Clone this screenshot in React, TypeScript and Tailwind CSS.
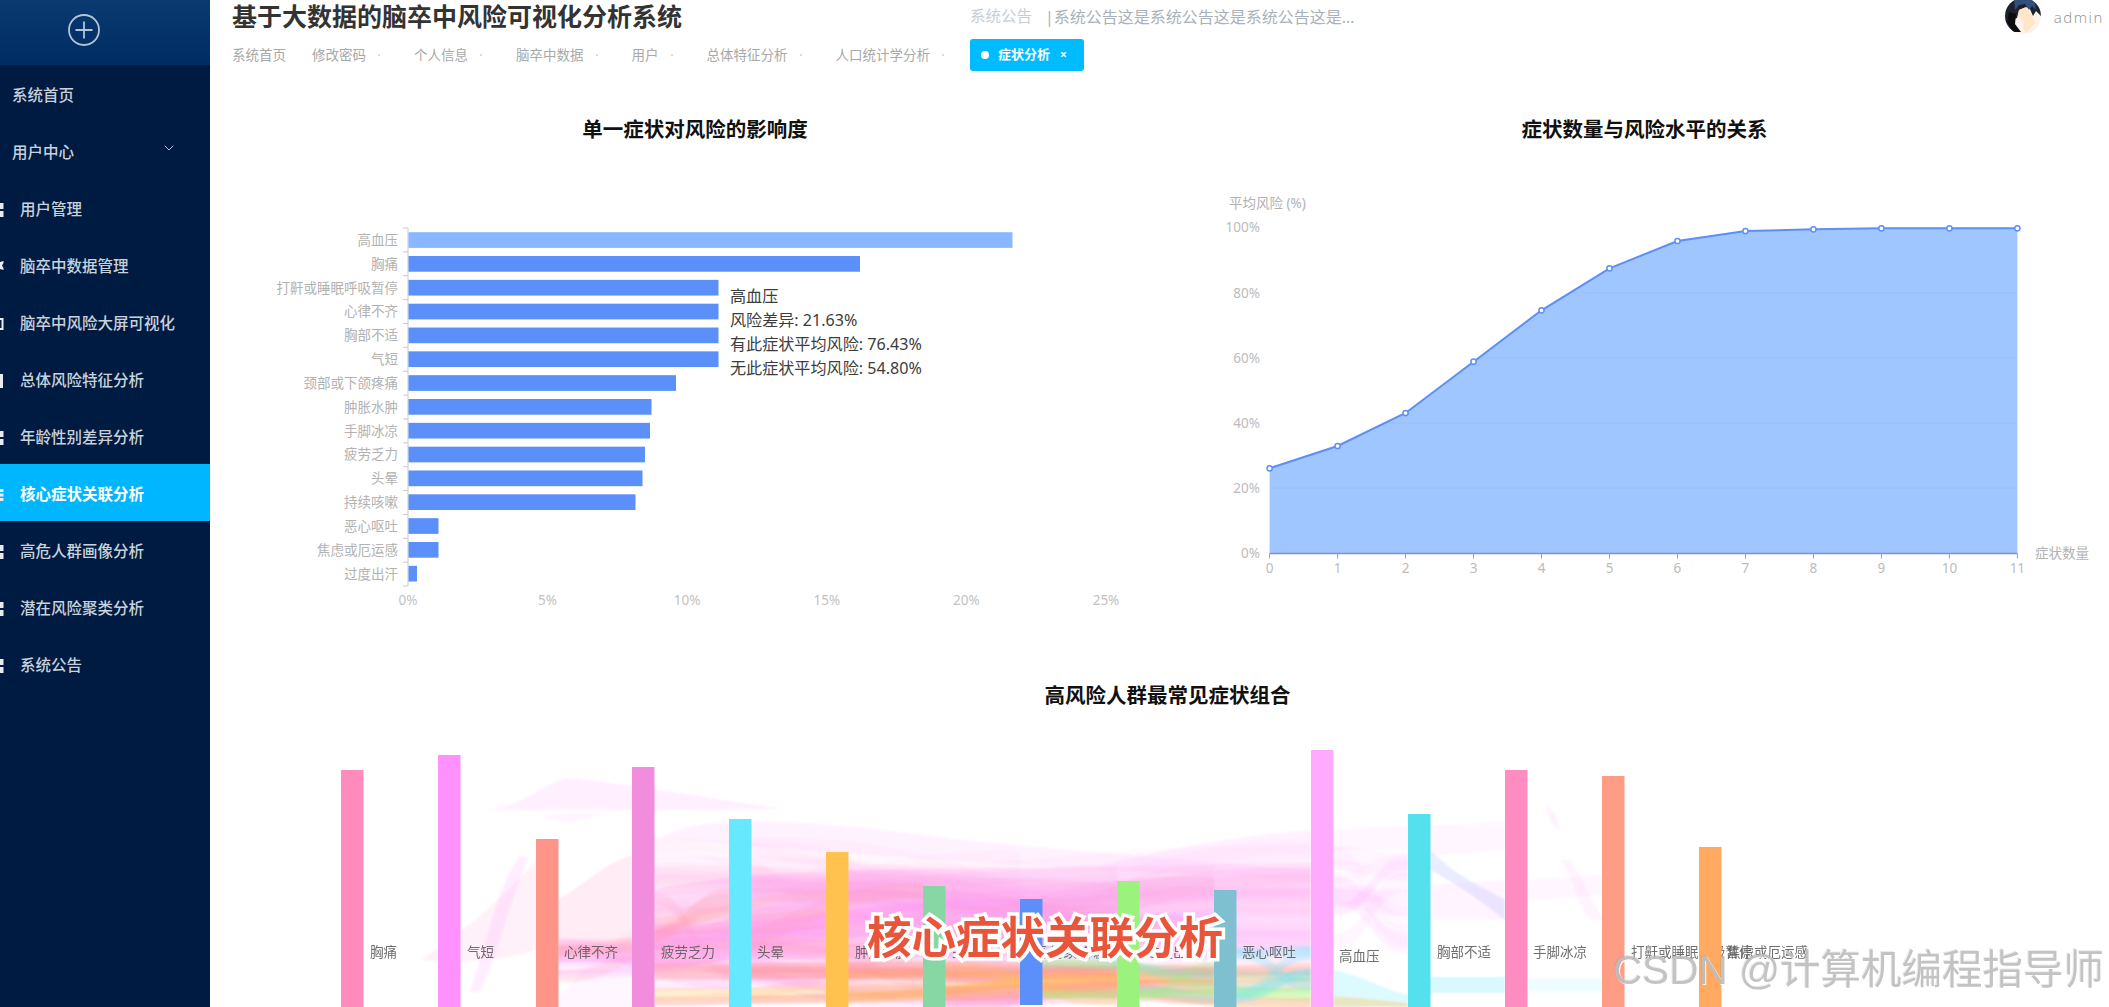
import { ChevronDown } from 'lucide-react'

const menu = [
  { name: '用户管理', icon: 'blocks' },
  { name: '脑卒中数据管理', icon: 'cross' },
  { name: '脑卒中风险大屏可视化', icon: 'box' },
  { name: '总体风险特征分析', icon: 'bar' },
  { name: '年龄性别差异分析', icon: 'blocks' },
  { name: '核心症状关联分析', icon: 'lines', active: true },
  { name: '高危人群画像分析', icon: 'blocks' },
  { name: '潜在风险聚类分析', icon: 'blocks' },
  { name: '系统公告', icon: 'blocks' },
]

const tabs = ['修改密码', '个人信息', '脑卒中数据', '用户', '总体特征分析', '人口统计学分析']

const bars = [
  ['高血压', 604], ['胸痛', 451.5], ['打鼾或睡眠呼吸暂停', 310], ['心律不齐', 310], ['胸部不适', 310],
  ['气短', 310], ['颈部或下颌疼痛', 267.5], ['肿胀水肿', 243], ['手脚冰凉', 241.5], ['疲劳乏力', 236.5],
  ['头晕', 234], ['持续咳嗽', 227], ['恶心呕吐', 30], ['焦虑或厄运感', 30], ['过度出汗', 8.5],
] as const

const riskY = [468.3, 446, 413, 361.7, 310.3, 268.3, 241, 231, 229.3, 228.3, 228.3, 228.3]
const riskX = riskY.map((_, i) => 1269.6 + i * 67.98)
const riskLine = riskX.map((x, i) => `${x} ${riskY[i]}`).join('L')

const nodes = [
  { label: '胸痛', x: 341, top: 770, color: '#ff8bbd', lx: 370 },
  { label: '气短', x: 438, top: 755, color: '#ff90ff', lx: 467 },
  { label: '心律不齐', x: 536, top: 839, color: '#ff9488', lx: 564 },
  { label: '疲劳乏力', x: 632, top: 767, color: '#f28cdd', lx: 661 },
  { label: '头晕', x: 729, top: 819, color: '#66e8ff', lx: 757 },
  { label: '肿胀水肿', x: 826, top: 852, color: '#ffc24f', lx: 855 },
  { label: '颈部或下颌疼痛', x: 923, top: 886, color: '#86d7a4', lx: 952 },
  { label: '持续咳嗽', x: 1020, top: 899, color: '#5b8ff9', lx: 1050, bottom: 1005 },
  { label: '过度出汗', x: 1117, top: 881, color: '#9bf27c', lx: 1146 },
  { label: '恶心呕吐', x: 1214, top: 890, color: '#7fc0d0', lx: 1242 },
  { label: '高血压', x: 1311, top: 750, color: '#ffaaff', lx: 1339, ly: 956 },
  { label: '胸部不适', x: 1408, top: 814, color: '#55e0ee', lx: 1437 },
  { label: '手脚冰凉', x: 1505, top: 770, color: '#ff8cc0', lx: 1533 },
  { label: '打鼾或睡眠呼吸暂停', x: 1602, top: 776, color: '#ff9c85', lx: 1631 },
  { label: '焦虑或厄运感', x: 1699, top: 847, color: '#ffaa60', lx: 1727 },
]

// ribbon groups: from/to are ranges of node indexes
const zones = [
  { n: 26, from: [3, 5], to: [6, 10], y: [835, 945], h: [12, 34], op: 0.07, colors: ['#ff9fe8', '#ffa6ff'] },
  { n: 40, from: [3, 6], to: [8, 10], y: [865, 955], h: [10, 30], op: 0.09, colors: ['#ff8fff', '#ff8cc0', '#f28cdd', '#ffaaff'] },
  { n: 22, from: [2, 4], to: [4, 7], y: [880, 1000], h: [8, 22], op: 0.15, colors: ['#ff8bbd', '#ff9488', '#ff90ff'] },
  { n: 22, from: [3, 7], to: [8, 10], y: [958, 1000], h: [6, 16], op: 0.26, colors: ['#ff9488', '#ffc24f', '#ff9c85', '#ff8bbd'] },
  { n: 12, from: [7, 9], to: [9, 10], y: [945, 995], h: [6, 14], op: 0.24, colors: ['#66e8ff', '#9bf27c', '#86d7a4'] },
  { n: 14, from: [10, 10], to: [11, 11], y: [845, 935], h: [8, 22], op: 0.08, colors: ['#ffa6ff', '#ff8fff'] },
]

function ribbon(x1: number, y1: number, h1: number, x2: number, y2: number, h2: number) {
  const m = (x1 + x2) / 2
  return `M${x1} ${y1}C${m} ${y1} ${m} ${y2} ${x2} ${y2}L${x2} ${y2 + h2}C${m} ${y2 + h2} ${m} ${y1 + h1} ${x1} ${y1 + h1}Z`
}

// fixed seed so the ribbons come out the same every time
function makeRibbons() {
  let seed = 41
  const rnd = () => {
    seed = (seed * 16807) % 2147483647
    return seed / 2147483647
  }
  const span = (r: number[]) => r[0] + rnd() * (r[1] - r[0])
  const pick = (r: number[]) => r[0] + Math.floor(rnd() * (r[1] - r[0] + 1))
  const out: { d: string; fill: string; op: number }[] = []
  zones.forEach((z) => {
    for (let i = 0; i < z.n; i++) {
      const a = pick(z.from)
      const b = Math.max(pick(z.to), a + 1)
      out.push({
        d: ribbon(nodes[a].x + 22, span(z.y), span(z.h), nodes[b].x, span(z.y), span(z.h)),
        fill: z.colors[Math.floor(rnd() * z.colors.length)],
        op: z.op,
      })
    }
  })
  return out
}

const ribbons = makeRibbons()

function NavIcon({ type }: { type: string }) {
  return (
    <svg width="4" height="16" viewBox="0 0 4 16" className="shrink-0" fill="#e8ecf0">
      {type === 'blocks' && (
        <>
          <rect x="0" y="1" width="3.5" height="6" />
          <rect x="0" y="9" width="3.5" height="6" />
        </>
      )}
      {type === 'lines' && (
        <>
          <rect x="0" y="2" width="3.5" height="3" />
          <rect x="0" y="6.5" width="3.5" height="3" />
          <rect x="0" y="11" width="3.5" height="3" />
        </>
      )}
      {type === 'cross' && <path d="M0 3l3.500 -1v2l-1.500 2.500l1.500 2.500v2l-3.500 -1z" />}
      {type === 'box' && <path d="M0 2h3.500v12h-3.500v-2h1.500v-8h-1.500z" />}
      {type === 'bar' && <rect x="0" y="1" width="3" height="14" />}
    </svg>
  )
}

function Avatar() {
  return (
    <svg width="36" height="36" viewBox="0 0 36 36" className="-mt-[3px]">
      <defs>
        <clipPath id="avatar-clip">
          <circle cx="18" cy="18" r="18" />
        </clipPath>
      </defs>
      <g clipPath="url(#avatar-clip)">
        <rect width="36" height="36" fill="#fdf3ea" />
        <path d="M0 0h36v18l-5 -5l-3 5l-4 -9l-5 1l-5 2l-2 8l-5 2l3 14h-10z" fill="#1d2230" />
        <path d="M9 0h20l2 12l-4 -4l-3 4l-4 -6l-6 1l-4 5z" fill="#33507c" />
        <path d="M4 14l7 2l-1 10l6 8h-8l-6 -10z" fill="#0d0d0f" />
        <path d="M14 12l7 -3l6 9l3 7l-9 10l-3 -6l1 -6l-6 -4z" fill="#ffe6c6" />
      </g>
    </svg>
  )
}

export default function App() {
  return (
    <div className="flex h-screen w-full overflow-hidden bg-white font-['Noto_Sans','Noto_Sans_CJK_SC',sans-serif]">
      {/* Sidebar */}
      <aside className="w-[210px] shrink-0 bg-[#001b42] text-[15.5px] font-medium leading-none text-[#c9d1da]">
        <div className="flex h-[65px] items-start bg-gradient-to-b from-[#0a3a70] to-[#002c63] pl-[68px] pt-[14px]">
          <svg width="32" height="32" viewBox="0 0 32 32" fill="none" stroke="#b4c4d6" strokeWidth="1.8">
            <circle cx="16" cy="16" r="15" />
            <path d="M16 7.500v17M7.500 16h17" />
          </svg>
        </div>
        <div className="flex h-[57px] items-center pl-[12px] pt-[5px]">系统首页</div>
        <div className="flex h-[57px] items-center justify-between pl-[12px] pr-[33px] pt-[5px]">
          <span>用户中心</span>
          <ChevronDown className="-mt-[11px] h-[16px] w-[16px] text-[#b4c2d2]" strokeWidth={1.5} />
        </div>
        {menu.map((item) => (
          <div
            key={item.name}
            className={`flex h-[57px] items-center gap-[16px] pt-[5px] ${
              item.active ? 'bg-[#00b7ff] font-bold text-white' : ''
            }`}
          >
            <NavIcon type={item.icon} />
            <span className="whitespace-nowrap">{item.name}</span>
          </div>
        ))}
      </aside>

      <main className="relative min-w-0 flex-1">
        {/* Header */}
        <header className="h-[80px] pl-[22px]">
          <div className="flex h-[34px] items-center">
            <h1 className="w-[738px] whitespace-nowrap text-[25px] font-bold text-[#333]">基于大数据的脑卒中风险可视化分析系统</h1>
            <span className="w-[75px] text-[15.5px] text-[#c3ced9]">系统公告</span>
            <span className="w-[320px] truncate text-[16px] text-[#a9b1bb]">|系统公告这是系统公告这是系统公告这是…</span>
            <div className="ml-auto flex items-center gap-[13px] pr-[5px]">
              <Avatar />
              <span className="font-['Open_Sans',sans-serif] text-[15px] font-light tracking-[1.6px] text-[#8f8f8f]">admin</span>
            </div>
          </div>
          <div className="mt-[5px] flex h-[32px] items-center gap-[26px] text-[13.5px] text-[#a8a8a8]">
            <span>系统首页</span>
            {tabs.map((tab, i) => (
              <span key={tab} className={`flex items-center gap-[12px] ${i < tabs.length - 1 ? 'pr-[8px]' : ''}`}>
                {tab}
                <i className="h-[2px] w-[2px] rounded-full bg-[#cfcfcf]" />
              </span>
            ))}
            <span className="flex h-[32px] w-[114px] items-center gap-[9px] rounded-[3px] bg-[#00bcff] pl-[11px] text-[13px] font-bold text-white">
              <i className="h-[8px] w-[8px] rounded-full bg-white" />
              症状分析
              <span className="ml-[1px] text-[12px]">×</span>
            </span>
          </div>
        </header>

        {/* Top charts */}
        <section className="grid grid-cols-[970px_1fr]">
          <div>
            <h3 className="mt-[37px] h-[24px] text-center text-[20.5px] font-bold leading-[24px] text-[#111]">单一症状对风险的影响度</h3>
            <svg viewBox="210 141 970 524" className="h-[524px] w-[970px]" fontSize="13.5" fill="#b2b2b2">
              <path d="M408 228V586" stroke="#c9c9c9" />
              {Array.from({ length: 16 }).map((_, i) => (
                <path key={i} d={`M403 ${228 + i * 23.87}H408`} stroke="#c9c9c9" />
              ))}
              {bars.map(([name, w], i) => (
                <g key={name}>
                  <text x="398" y={240 + i * 23.83} dy="5" textAnchor="end">{name}</text>
                  <rect x="408.500" y={232.2 + i * 23.83} width={w} height="15.700" fill={i === 0 ? '#8ab7ff' : '#5b8ff9'} />
                </g>
              ))}
              {[0, 5, 10, 15, 20, 25].map((v, i) => (
                <text key={v} x={408 + i * 139.6} y="605" textAnchor="middle" fill="#c2c2c2">{v}%</text>
              ))}
              <g fontSize="16.100" fill="#3d3d3d">
                <text x="730" y="302">高血压</text>
                <text x="730" y="326">风险差异: 21.63%</text>
                <text x="730" y="350">有此症状平均风险: 76.43%</text>
                <text x="730" y="374">无此症状平均风险: 54.80%</text>
              </g>
            </svg>
          </div>
          <div>
            <h3 className="mt-[37px] h-[24px] text-center text-[20.5px] font-bold leading-[24px] text-[#111]">症状数量与风险水平的关系</h3>
            <svg viewBox="1180 141 929 524" className="h-[524px] w-[929px]" fontSize="13.5" fill="#bcbcbc">
              <defs>
                <clipPath id="risk-area">
                  <path d={`M${riskLine}L2017.400 553.300L1269.600 553.300Z`} />
                </clipPath>
              </defs>
              <text x="1229" y="208" fill="#b2b2b2">平均风险 (%)</text>
              {[0, 20, 40, 60, 80, 100].map((v, i) => (
                <text key={v} x="1260" y={558 - i * 65.12} textAnchor="end">{v}%</text>
              ))}
              <path d={`M${riskLine}L2017.400 553.300L1269.600 553.300Z`} fill="#a0c6ff" />
              <g clipPath="url(#risk-area)">
                {[1, 2, 3, 4].map((i) => (
                  <path key={i} d={`M1270 ${553.3 - i * 65.12}H2017`} stroke="#97bffb" />
                ))}
              </g>
              <path d="M1269.600 553.500H2017.400" stroke="#7c8fdc" strokeWidth="1.500" />
              {riskX.map((x, i) => (
                <g key={i}>
                  <path d={`M${x} 553.500v5`} stroke="#8c9bdc" />
                  <text x={x} y="573" textAnchor="middle">{i}</text>
                </g>
              ))}
              <path d={`M${riskLine}`} fill="none" stroke="#5b8ff9" strokeWidth="2" />
              {riskX.map((x, i) => (
                <circle key={i} cx={x} cy={riskY[i]} r="2.600" fill="#fff" stroke="#5b8ff9" strokeWidth="1.500" />
              ))}
              <text x="2035" y="558" fill="#b2b2b2">症状数量</text>
            </svg>
          </div>
        </section>

        {/* Symptom combination flow */}
        <section>
          <h3 className="mt-[18px] h-[24px] text-center text-[20.5px] font-bold leading-[24px] text-[#111] [text-indent:16px]">高风险人群最常见症状组合</h3>
          <svg viewBox="210 730 1899 277" className="mt-[23px] h-[277px] w-[1899px]" fontSize="13.5">
            <defs>
              <filter id="soft" x="-5%" y="-5%" width="110%" height="110%">
                <feGaussianBlur stdDeviation="0.9" />
              </filter>
            </defs>
            <g filter="url(#soft)">
              <path d="M484 810C530 806 540 782 570 778C640 786 720 800 783 809Z" fill="#ff90ff" opacity="0.14" />
              <path d="M540 816C560 812 580 814 610 813L570 822Z" fill="#ff90ff" opacity="0.1" />
              <path d="M660 838C700 815 780 818 900 832C1000 846 1200 860 1311 870V880C1100 870 900 860 660 838Z" fill="#ffa6ff" opacity="0.14" />
              <path d="M1100 866C1180 845 1250 835 1311 830V860C1250 866 1180 868 1100 866Z" fill="#ffa6ff" opacity="0.16" />
              <path d="M650 890C800 860 1000 872 1311 862V950C1100 965 850 950 650 968Z" fill="#ffa0f4" opacity="0.24" />
              <path d="M420 960C470 930 520 880 536 860V950C500 960 460 965 420 960Z" fill="#ff8fd0" opacity="0.12" />
              <path d="M470 992C490 930 500 880 520 856L528 858C510 900 500 950 480 992Z" fill="#ff90ff" opacity="0.15" />
              <path d="M558 900C590 880 610 860 632 856V950C600 960 580 950 558 960Z" fill="#ff8bbd" opacity="0.16" />
              <path d="M558 1000C590 960 610 940 632 930V1007H558Z" fill="#ff90ff" opacity="0.08" />
              <path d="M1333 830C1360 828 1385 826 1408 826V850H1333Z" fill="#ffa6ff" opacity="0.1" />
              <path d="M1430 825C1460 825 1490 823 1505 820V850C1480 850 1450 855 1430 856Z" fill="#ffa6ff" opacity="0.1" />
              <path d="M1430 850C1460 880 1490 890 1505 900V920C1480 900 1450 880 1430 870Z" fill="#a8b8ff" opacity="0.25" />
              <path d="M1430 885L1505 880V920H1430Z" fill="#ffa6ff" opacity="0.12" />
              <path d="M1527 880L1602 875V895L1527 900Z" fill="#ffa6ff" opacity="0.1" />
              <path d="M1545 805C1555 810 1558 820 1560 830L1552 825Z" fill="#ffa6ff" opacity="0.15" />
              <path d="M1560 860C1575 880 1575 900 1590 920H1604C1590 900 1585 880 1570 860Z" fill="#ffa6ff" opacity="0.12" />
              <path d="M1333 970C1360 975 1385 990 1408 995V1007H1333Z" fill="#66e8ff" opacity="0.22" />
              <path d="M1430 977H1505V993H1430Z" fill="#66e8ff" opacity="0.25" />
              <path d="M1527 979H1602V992H1527Z" fill="#66e8ff" opacity="0.12" />
              <path d="M1333 996C1360 998 1385 1000 1408 1003V1007H1333Z" fill="#ffc24f" opacity="0.35" />
              {ribbons.map((r, i) => (
                <path key={i} d={r.d} fill={r.fill} opacity={r.op} />
              ))}
            </g>
            {nodes.map((n) => (
              <g key={n.label}>
                <rect x={n.x} y={n.top} width="22.500" height={(n.bottom ?? 1007) - n.top} fill={n.color} />
                <text x={n.lx} y={(n.ly ?? 951.500) + 5} fill="#555" fillOpacity="0.85">{n.label}</text>
              </g>
            ))}
          </svg>
        </section>

        {/* Video caption and watermark sit on top of the page */}
        <div className="absolute left-[657px] top-[907px] whitespace-nowrap text-[44.5px] font-bold leading-[60px] text-[#e8553a] [-webkit-text-stroke:7px_white] [paint-order:stroke_fill]">
          核心症状关联分析
        </div>
        <div className="absolute right-[5px] top-[943px] whitespace-nowrap font-['Liberation_Sans','Noto_Sans_CJK_SC',sans-serif] text-[40.5px] leading-[54px] text-[#bdbdbd] opacity-90 [text-shadow:1px_1px_0_#fff,-1px_-1px_0_#8a8a8a33]">
          CSDN @计算机编程指导师
        </div>
      </main>
    </div>
  )
}
